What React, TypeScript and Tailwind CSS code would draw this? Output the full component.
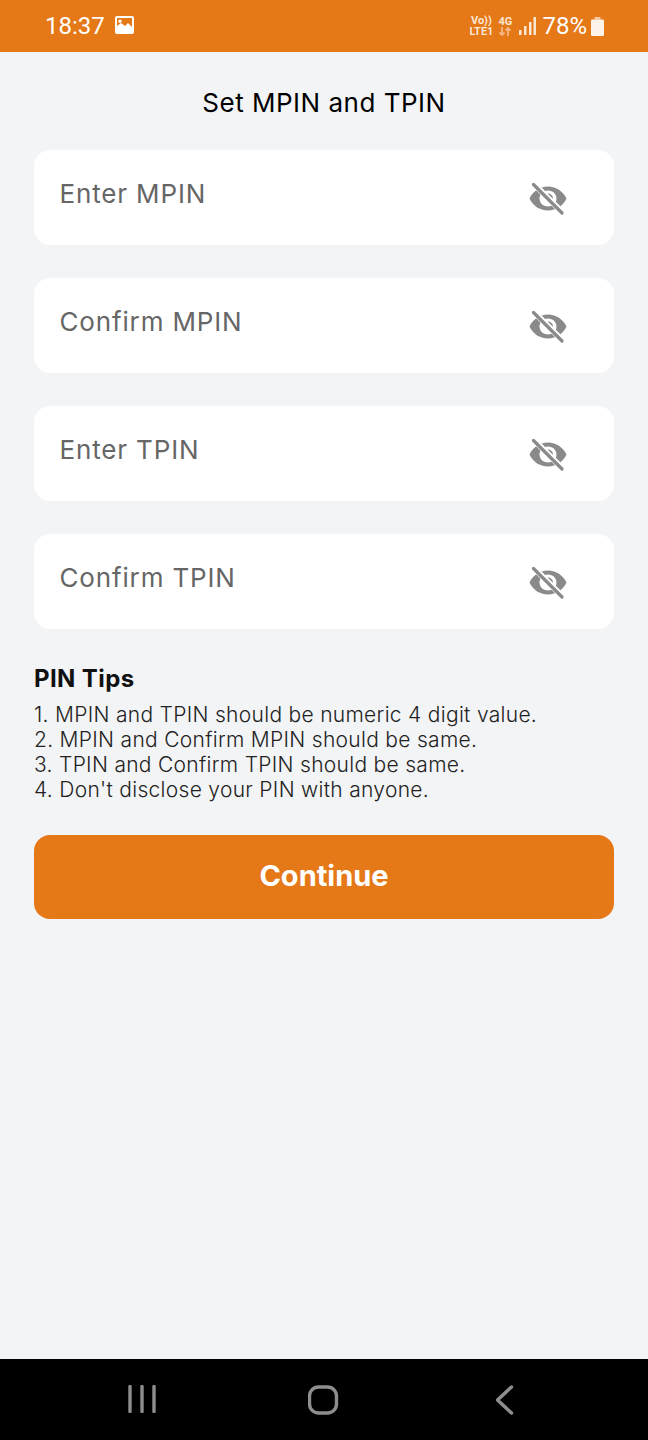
const font = "[font-family:Inter,'Liberation_Sans',sans-serif]";

function EyeOff() {
  return (
    <svg width="40" height="36" viewBox="0 0 40 36" className="shrink-0">
      <path
        fillRule="evenodd"
        fill="#8a8a8a"
        d="M20 6.500C11.500 6.500 4.600 11.500 1.500 18.500C4.600 25.500 11.500 30.500 20 30.500C28.500 30.500 35.400 25.500 38.500 18.500C35.400 11.500 28.500 6.500 20 6.500ZM20 10.500C24.700 10.500 28.500 14.100 28.500 18.500C28.500 22.900 24.700 26.500 20 26.500C15.300 26.500 11.500 22.900 11.500 18.500C11.500 14.100 15.300 10.500 20 10.500Z"
      />
      <path fill="#8a8a8a" d="M20 13.500a5 5 0 0 1 5 5a5 5 0 0 1 -.6 2.300l-6.700 -6.700a5 5 0 0 1 2.300 -.6Z" />
      <path d="M7 5L34 32" stroke="#ffffff" strokeWidth="6" />
      <path d="M5.500 4.500L34 33" stroke="#8a8a8a" strokeWidth="3.200" strokeLinecap="round" />
    </svg>
  );
}

function PinField({ label }: { label: string }) {
  return (
    <div className="h-[94.500px] rounded-2xl bg-white flex justify-between pl-[25.500px] pr-[46px]">
      <span className={`mt-[27px] h-[33px] text-[26px] leading-[33px] tracking-[0.85px] text-[#666666] ${font}`}>{label}</span>
      <div className="mt-[30px]">
        <EyeOff />
      </div>
    </div>
  );
}

export default function App() {
  const fields = ['Enter MPIN', 'Confirm MPIN', 'Enter TPIN', 'Confirm TPIN'];
  const tips = [
    '1. MPIN and TPIN should be numeric 4 digit value.',
    '2. MPIN and Confirm MPIN should be same.',
    '3. TPIN and Confirm TPIN should be same.',
    "4. Don't disclose your PIN with anyone.",
  ];

  return (
    <div className="w-[648px] h-[1440px] flex flex-col bg-[#f3f4f6] overflow-hidden">
      {/* Status bar */}
      <div className="h-[52px] bg-[#e57817] flex items-center justify-between pl-[45px] pr-[44px] text-white shrink-0">
        <div className="flex items-center gap-[10px]">
          <span className="text-[24px] leading-none font-['Roboto',sans-serif]">18:37</span>
          <svg width="19" height="18" viewBox="0 0 19 18" className="mb-[3px]">
            <path
              fill="#fff"
              fillRule="evenodd"
              d="M2 0H17a2 2 0 0 1 2 2V16a2 2 0 0 1-2 2H2a2 2 0 0 1-2-2V2a2 2 0 0 1 2-2ZM2 2V10L6 7L10 10L13 7L17 11V2ZM5 3.500a1.700 1.700 0 1 0 .01 0Z"
            />
          </svg>
        </div>
        <div className="flex items-center">
          <div className="flex flex-col items-center text-[11px] leading-[11px] font-bold font-['Roboto',sans-serif] text-[#fbe6d4]">
            <span>Vo))</span>
            <span>LTE1</span>
          </div>
          <div className="ml-[5px] flex flex-col items-center text-[11px] leading-[11px] font-bold font-['Roboto',sans-serif] text-[#fbe6d4]">
            <span>4G</span>
            <svg width="14" height="9" viewBox="0 0 14 9">
              <path d="M4 0V8M1.500 5.500L4 8L6.500 5.500" stroke="#f4b684" strokeWidth="1.800" fill="none" />
              <path d="M10 9V1M7.500 3.500L10 1L12.500 3.500" stroke="#f4b684" strokeWidth="1.800" fill="none" />
            </svg>
          </div>
          <svg width="17" height="18" viewBox="0 0 17 18" className="ml-[7px]">
            <rect x="0" y="13" width="2.500" height="5" fill="#fbe6d4" />
            <rect x="5" y="9" width="2.500" height="9" fill="#fbe6d4" />
            <rect x="10" y="5" width="2.500" height="13" fill="#fbe6d4" />
            <rect x="14.500" y="0" width="2.500" height="18" fill="#fbe6d4" />
          </svg>
          <span className="ml-[6px] text-[24px] leading-none font-['Roboto',sans-serif]">78%</span>
          <svg width="13" height="19" viewBox="0 0 13 19" className="ml-[4px]">
            <path fill="#f7c9a0" d="M3.500 0H9.500V2.500H3.500Z" />
            <path fill="#fdf3ea" d="M1 2.500H12a1 1 0 0 1 1 1V18a1 1 0 0 1-1 1H1a1 1 0 0 1-1-1V3.500a1 1 0 0 1 1-1Z" />
          </svg>
        </div>
      </div>

      {/* Form */}
      <div className="flex-1 px-[34px]">
        <h1 className={`mt-[35px] text-center text-[26px] leading-[32px] font-normal text-black tracking-[0.5px] ${font}`}>
          Set MPIN and TPIN
        </h1>
        <div className="mt-[31px] flex flex-col gap-[33.500px]">
          {fields.map((f) => (
            <PinField key={f} label={f} />
          ))}
        </div>
        <h2 className={`mt-[35px] text-[24px] leading-[30px] font-bold tracking-[0.4px] text-[#111111] ${font}`}>PIN Tips</h2>
        <div className={`mt-[8px] text-[21px] leading-[25px] font-light tracking-[0.3px] text-[#222222] ${font}`}>
          {tips.map((t) => (
            <div key={t}>{t}</div>
          ))}
        </div>
        <button className={`mt-[33px] w-full h-[84px] rounded-2xl bg-[#e57817] text-white text-[29px] font-bold pb-[2px] ${font}`}>
          Continue
        </button>
      </div>

      {/* Nav bar */}
      <div className="h-[81px] bg-black grid grid-cols-3 justify-items-center shrink-0 items-start px-[51.500px] pt-[26px]">
        <svg width="28" height="28" viewBox="0 0 28 28">
          <path d="M2 1.500V26.500M14 1.500V26.500M26 1.500V26.500" stroke="#8e8e8e" strokeWidth="3.400" strokeLinecap="round" />
        </svg>
        <svg width="32" height="30" viewBox="0 0 32 30">
          <rect x="1.500" y="2" width="27" height="26" rx="9" fill="none" stroke="#8e8e8e" strokeWidth="3.400" />
        </svg>
        <svg width="20" height="30" viewBox="0 0 20 30">
          <path d="M15.500 2L1.500 15L15.500 28" fill="none" stroke="#8e8e8e" strokeWidth="3.400" strokeLinecap="round" strokeLinejoin="round" />
        </svg>
      </div>
    </div>
  );
}
